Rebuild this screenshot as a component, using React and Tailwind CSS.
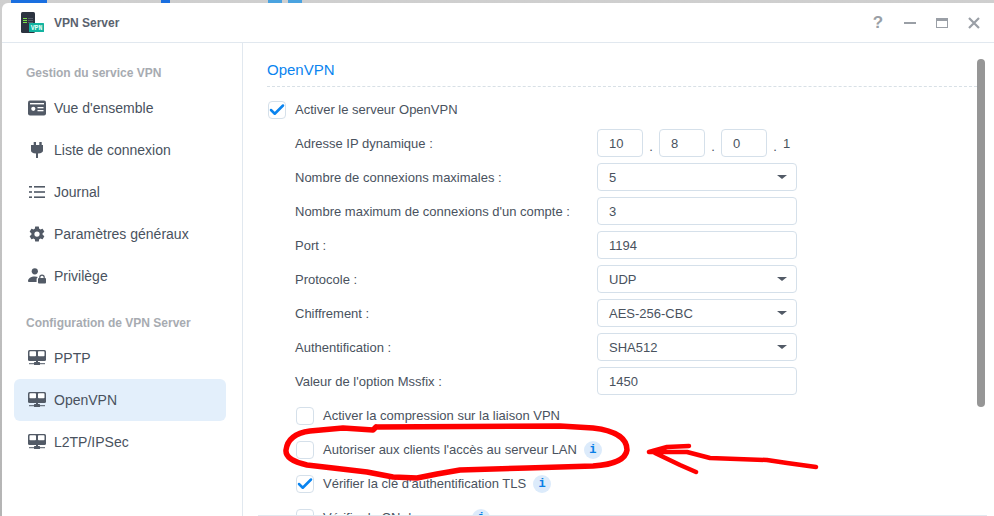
import { Check } from 'lucide-react';

const font = "font-['Liberation_Sans','Roboto',sans-serif]";

function NetIcon() {
  return (
    <svg width="18" height="16" viewBox="0 0 18 16">
      <rect x="0" y="0" width="18" height="11" rx="1.500" fill="#525a66" />
      <rect x="1.500" y="1.200" width="6.500" height="5" rx="0.800" fill="#fff" />
      <rect x="10" y="1.200" width="6.500" height="5" rx="0.800" fill="#fff" />
      <rect x="8" y="10" width="2" height="3" fill="#525a66" />
      <rect x="1" y="13.200" width="16" height="1" fill="#525a66" />
      <rect x="6" y="12" width="6" height="3" rx="0.600" fill="#525a66" />
    </svg>
  );
}

function OverviewIcon() {
  return (
    <svg width="18" height="16" viewBox="0 0 18 16">
      <rect width="18" height="15" y="0.500" rx="2" fill="#525a66" />
      <rect x="2" y="3" width="14" height="1.400" fill="#fff" />
      <circle cx="5.300" cy="8.800" r="2.100" fill="#fff" />
      <rect x="9.500" y="7" width="6" height="1.300" fill="#fff" />
      <rect x="9.500" y="10" width="6" height="1.300" fill="#fff" />
    </svg>
  );
}

function PlugIcon() {
  return (
    <svg width="18" height="18" viewBox="0 0 18 18">
      <path d="M5.700 1H8v3h3.300V1h2.400v3H15v5.500c0 1.700-1.500 2.800-5 3V17H8v-4.500c-3.500-.2-5-1.300-5-3V4h2.700z" fill="#525a66" />
    </svg>
  );
}

function ListIcon() {
  return (
    <svg width="16" height="14" viewBox="0 0 16 14" fill="#525a66">
      <rect x="0" y="1" width="3" height="1.600" />
      <rect x="5" y="1" width="11" height="1.600" />
      <rect x="0" y="6.200" width="3" height="1.600" />
      <rect x="5" y="6.200" width="11" height="1.600" />
      <rect x="0" y="11.400" width="3" height="1.600" />
      <rect x="5" y="11.400" width="11" height="1.600" />
    </svg>
  );
}

function GearIcon() {
  return (
    <svg width="20" height="20" viewBox="0 0 24 24">
      <path
        fill="#525a66"
        d="M19.430 12.980c.04-.32.07-.64.07-.98s-.03-.66-.07-.98l2.110-1.650c.19-.15.24-.42.12-.64l-2-3.460c-.12-.22-.39-.3-.61-.22l-2.490 1c-.52-.4-1.080-.73-1.690-.98l-.38-2.650A.488.488 0 0 0 14 2h-4c-.25 0-.46.18-.49.420l-.38 2.650c-.61.25-1.170.59-1.690.98l-2.490-1c-.23-.09-.49 0-.61.22l-2 3.460c-.13.22-.07.49.12.64l2.110 1.650c-.04.32-.07.65-.07.98s.03.66.07.98l-2.110 1.650c-.19.15-.24.42-.12.64l2 3.460c.12.22.39.3.61.22l2.490-1c.52.4 1.080.73 1.690.98l.38 2.650c.03.24.24.42.49.42h4c.25 0 .46-.18.49-.42l.38-2.650c.61-.25 1.170-.59 1.690-.98l2.490 1c.23.09.49 0 .61-.22l2-3.460c.12-.22.07-.49-.12-.64l-2.110-1.650zM12 15.500a3.500 3.500 0 1 1 0-7 3.500 3.500 0 0 1 0 7z"
      />
    </svg>
  );
}

function PrivilegeIcon() {
  return (
    <svg width="18" height="16" viewBox="0 0 18 16" fill="#525a66">
      <circle cx="6.800" cy="3.300" r="3.100" />
      <path d="M0 13.500c0-3.300 3-5 6.800-5 1.200 0 2.300.2 3.200.5-.9.6-1.400 1.500-1.400 2.500v2.500H1c-.6 0-1-.4-1-.5z" />
      <rect x="10" y="10" width="8" height="5.500" rx="1" />
      <path d="M11.800 10.500V9.300a2.200 2.200 0 0 1 4.400 0v1.200" fill="none" stroke="#525a66" strokeWidth="1.200" />
    </svg>
  );
}

function AppLogo() {
  return (
    <svg width="26" height="24" viewBox="0 0 26 24">
      <rect x="1" y="1" width="14" height="21" rx="1.500" fill="#2c3340" />
      <rect x="3" y="7" width="4" height="1" fill="#7be04a" />
      <rect x="3" y="9" width="4" height="1" fill="#7be04a" />
      <rect x="3" y="11" width="4" height="1" fill="#7be04a" />
      <rect x="8" y="7" width="5" height="1" fill="#555c6a" />
      <rect x="8" y="9" width="5" height="1" fill="#555c6a" />
      <rect x="8" y="11" width="5" height="1" fill="#555c6a" />
      <rect x="9" y="12" width="15" height="9" rx="0.500" fill="#12b3a0" />
      <text x="16.500" y="19" textAnchor="middle" fontSize="6.500" fontWeight="700" fill="#e6fff8" fontFamily="Liberation Mono, monospace">VPN</text>
    </svg>
  );
}

function NavItem({ icon, label, active }) {
  return (
    <div className={`flex h-[42px] items-center rounded-md pl-[14px] ${active ? 'bg-[#e3effb]' : ''}`}>
      <span className="flex w-[18px] justify-center">{icon}</span>
      <span className="ml-[8px] text-[14px] text-[#49525e]">{label}</span>
    </div>
  );
}

function Field({ label, children }) {
  return (
    <div className="flex h-[34px] items-center pl-[28px]">
      <span className="w-[302px] text-[13px] text-[#49525e]">{label}</span>
      {children}
    </div>
  );
}

function TextBox({ value, width = 'w-[200px]' }) {
  return (
    <div className={`mb-[2px] flex h-[28px] ${width} items-center rounded-[4px] border border-[#d5e0ea] pl-[11px] pt-[2px] text-[13px] text-[#49525e]`}>
      {value}
    </div>
  );
}

function SelectBox({ value }) {
  return (
    <div className="mb-[2px] flex h-[28px] w-[200px] items-center justify-between rounded-[4px] border border-[#d5e0ea] pl-[11px] pr-[9px] pt-[2px] text-[13px] text-[#49525e]">
      {value}
      <span className="mb-[2px] h-0 w-0 border-x-[5px] border-t-[4px] border-x-transparent border-t-[#525a66]" />
    </div>
  );
}

function Dot() {
  return <span className="flex w-[16px] justify-center self-end pb-[8px] text-[13px] leading-none text-[#49525e]">.</span>;
}

function CheckBox({ checked }) {
  return (
    <span className="flex h-[18px] w-[18px] shrink-0 items-center justify-center rounded-[4px] border border-[#d5e0ea] bg-white">
      {checked && <Check size={18} strokeWidth={3.4} className="shrink-0 text-[#0a84ef]" />}
    </span>
  );
}

function InfoBadge() {
  return (
    <span className="ml-[7px] flex h-[18px] w-[18px] items-center justify-center rounded-full bg-[#dcebfb] font-['Liberation_Mono',monospace] text-[12px] font-bold leading-none text-[#0a7fe6]">
      i
    </span>
  );
}

function CheckRow({ label, checked, info }) {
  return (
    <div className="flex h-[34px] items-center pl-[29px]">
      <CheckBox checked={checked} />
      <span className="ml-[9px] text-[13px] text-[#49525e]">{label}</span>
      {info && <InfoBadge />}
    </div>
  );
}

// hand-drawn red marks traced from the picture
function Scribble() {
  return (
    <svg className="pointer-events-none absolute left-0 top-0" width="994" height="516" viewBox="0 0 994 516" fill="none" stroke="#ff0000" strokeLinecap="round" strokeLinejoin="round">
      <path
        strokeWidth="5.500"
        d="M376 427 L560 426 L593 428 Q627 432 627 450 Q625 464 593 466 L527 468 L460 470 L437 474 L417 478 L393 477 L367 472 L333 468 L307 465 Q285 460 286 450 Q288 434 310 431 L343 428 L373 430 L376 427"
      />
      <path strokeWidth="4.500" d="M649 452 L667 447 L689 446 M649 452 L687 452 L710 458 L767 460 L787 463 L816 467 M655 453 L680 465 L696 472" />
    </svg>
  );
}

export default function App() {
  return (
    <div className={`${font} relative h-[516px] w-[994px] overflow-hidden bg-gradient-to-b from-[#cfcfcf] to-[#b4b4b4]`}>
      <div className="absolute left-[11px] top-0 h-[3px] w-[36px] bg-[#1a6fe0]" />
      <div className="absolute left-[161px] top-0 h-[3px] w-[9px] bg-[#1a6fe0]" />
      <div className="absolute left-[268px] top-0 h-[3px] w-[14px] bg-[#4aa3e0]" />
      <div className="absolute left-[288px] top-0 h-[3px] w-[14px] bg-[#4aa3e0]" />

      <div className="ml-[2px] mt-[3px] flex h-[513px] flex-col rounded-tl-md bg-white">
        <header className="flex h-[40px] shrink-0 items-center border-b border-[#e1e8ef] pl-[18px]">
          <AppLogo />
          <span className="ml-[8px] text-[12px] font-bold text-[#5a626e]">VPN Server</span>
          <div className="ml-auto mr-[14px] flex items-center text-[#9a9fa6]">
            <span className="w-[20px] text-center text-[17px] font-bold leading-none">?</span>
            <span className="ml-[16px] h-[2px] w-[12px] bg-[#9a9fa6]" />
            <span className="ml-[20px] h-[10px] w-[12px] border-[1.500px] border-t-[3px] border-[#9a9fa6]" />
            <svg className="ml-[20px]" width="12" height="12" viewBox="0 0 12 12" stroke="#9a9fa6" strokeWidth="2.200">
              <path d="M1 1l10 10M11 1L1 11" />
            </svg>
          </div>
        </header>

        <div className="flex min-h-0 flex-1">
          <aside className="w-[241px] shrink-0 border-r border-[#e1e8ef] pl-[12px] pr-[16px]">
            <div className="pb-[6px] pl-[12px] pt-[22px] text-[12px] font-bold leading-[16px] text-[#a7abb1]">Gestion du service VPN</div>
            <NavItem icon={<OverviewIcon />} label="Vue d'ensemble" />
            <NavItem icon={<PlugIcon />} label="Liste de connexion" />
            <NavItem icon={<ListIcon />} label="Journal" />
            <NavItem icon={<GearIcon />} label="Paramètres généraux" />
            <NavItem icon={<PrivilegeIcon />} label="Privilège" />
            <div className="pb-[6px] pl-[12px] pt-[18px] text-[12px] font-bold leading-[16px] text-[#a7abb1]">Configuration de VPN Server</div>
            <NavItem icon={<NetIcon />} label="PPTP" />
            <NavItem icon={<NetIcon />} label="OpenVPN" active />
            <NavItem icon={<NetIcon />} label="L2TP/IPSec" />
          </aside>

          <main className="relative min-w-0 flex-1 overflow-hidden pl-[24px] pr-[17px]">
            <div className="border-b border-dashed border-[#d8e0e6] pb-[6px] pt-[17px] text-[15px] leading-[20px] text-[#0a84ef]">OpenVPN</div>
            <div className="flex h-[46px] items-center pl-[1px]">
              <CheckBox checked />
              <span className="ml-[9px] text-[13px] text-[#49525e]">Activer le serveur OpenVPN</span>
            </div>
            <div className="-mt-[6px]">
              <Field label="Adresse IP dynamique :">
                <TextBox value="10" width="w-[46px]" />
                <Dot />
                <TextBox value="8" width="w-[46px]" />
                <Dot />
                <TextBox value="0" width="w-[46px]" />
                <Dot />
                <span className="text-[13px] text-[#49525e]">1</span>
              </Field>
              <Field label="Nombre de connexions maximales :"><SelectBox value="5" /></Field>
              <Field label="Nombre maximum de connexions d'un compte :"><TextBox value="3" /></Field>
              <Field label="Port :"><TextBox value="1194" /></Field>
              <Field label="Protocole :"><SelectBox value="UDP" /></Field>
              <Field label="Chiffrement :"><SelectBox value="AES-256-CBC" /></Field>
              <Field label="Authentification :"><SelectBox value="SHA512" /></Field>
              <Field label="Valeur de l'option Mssfix :"><TextBox value="1450" /></Field>
              <CheckRow label="Activer la compression sur la liaison VPN" />
              <CheckRow label="Autoriser aux clients l'accès au serveur LAN" info />
              <CheckRow label="Vérifier la clé d'authentification TLS" checked info />
              <CheckRow label="Vérifier le CN du serveur" info />
            </div>
          </main>
        </div>
      </div>

      {/* scrollbar + footer rule sit over the scrolling form */}
      <div className="absolute left-[977px] top-[59px] h-[348px] w-[8px] rounded-full bg-[#969696]" />
      <div className="absolute bottom-0 left-[258px] h-[1px] w-[729px] bg-[#e1e8ef]" />
      <Scribble />
    </div>
  );
}
